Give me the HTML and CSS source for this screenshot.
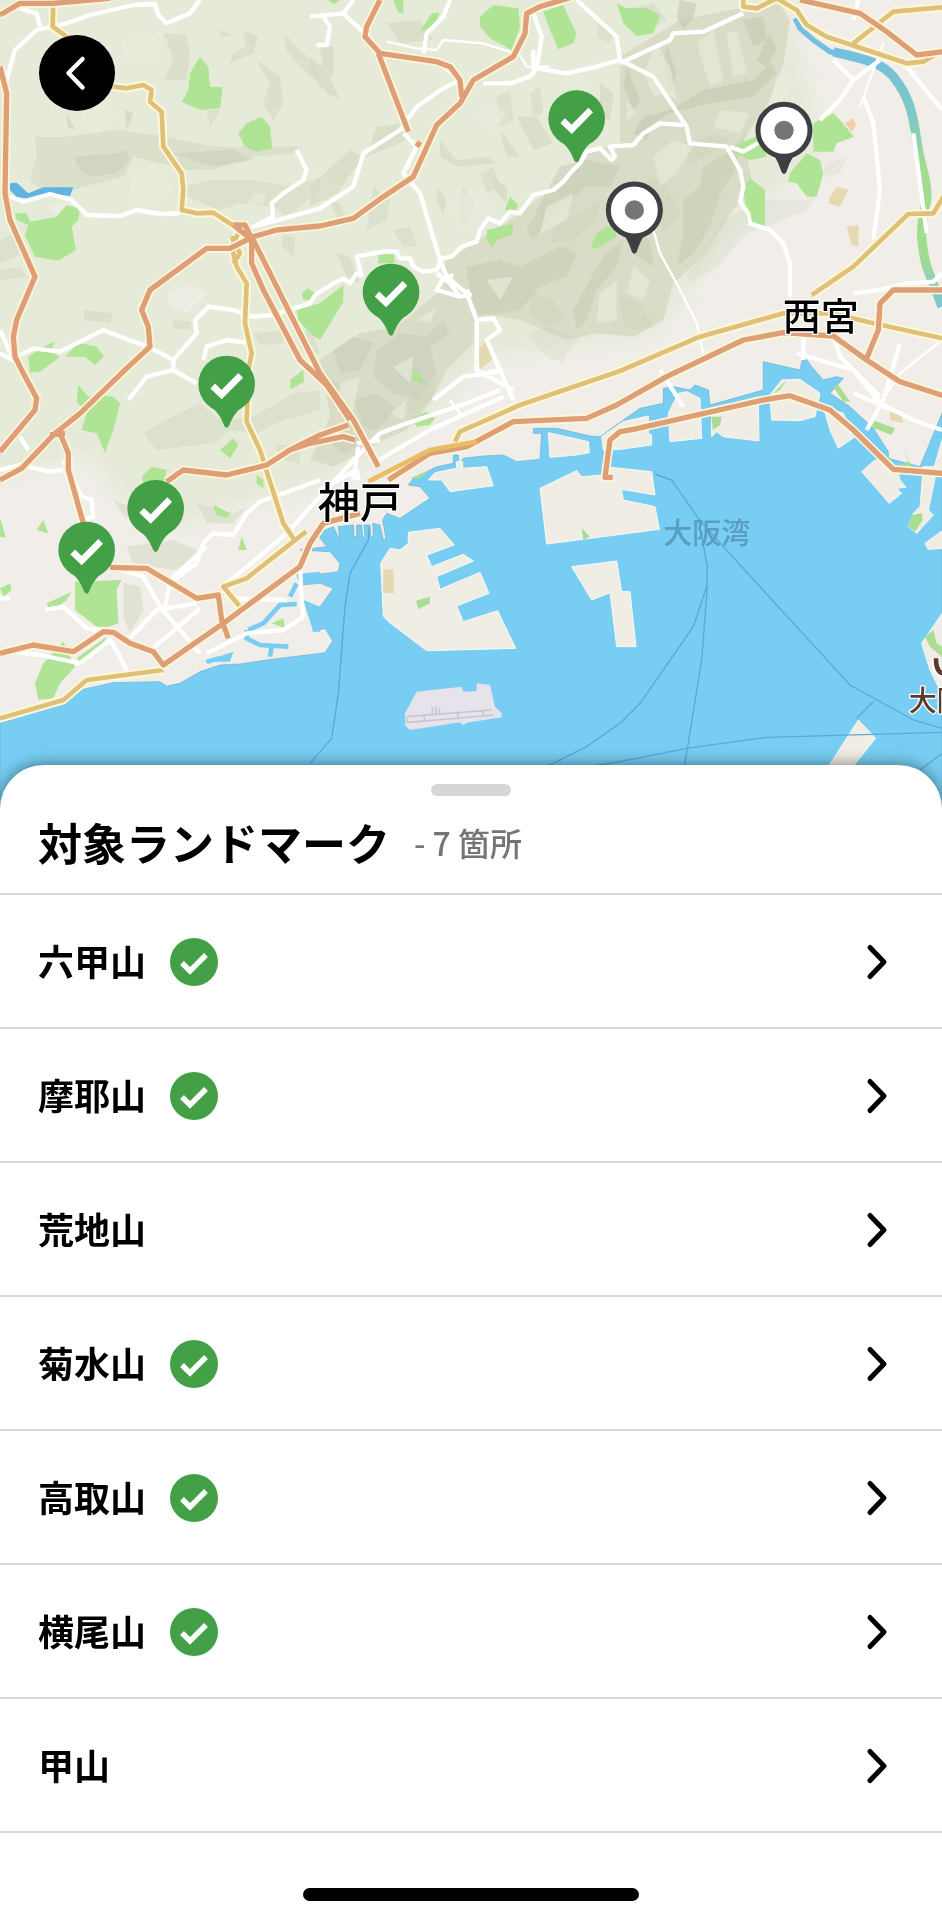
FILE: index.html
```html
<!DOCTYPE html>
<html lang="ja">

<head>
  <meta charset="UTF-8" />
  <meta name="viewport" content="width=device-width, initial-scale=1.0" />
  <title>対象ランドマーク</title>
  <link rel="stylesheet" href="styles.css">
</head>

<body>
  <!-- Shared icons -->
  <svg class="symbols" aria-hidden="true">
    <symbol id="check" viewBox="0 0 48 48">
      <circle cx="24" cy="24" r="24" fill="#43a047" />
      <path d="M12 25 20 33 36 17" fill="none" stroke="#fff" stroke-width="5.400" />
    </symbol>
    <symbol id="chevron" viewBox="0 0 24 40">
      <path d="M4 5.500 18 20 4 34.500" fill="none" stroke="#000" stroke-width="5" stroke-linecap="round" stroke-linejoin="round" />
    </symbol>
  </svg>

  <main class="app">
    <section class="map">
      <svg class="map-canvas" viewBox="0 0 2826 2460" role="img" aria-label="神戸周辺の地図">
        <defs>
          <filter id="soft" x="-10%" y="-10%" width="120%" height="120%">
            <feGaussianBlur stdDeviation="28" />
          </filter>
          <linearGradient id="river" x1="0" y1="0" x2="0" y2="1">
            <stop offset="0" stop-color="#74bfe0" />
            <stop offset="0.250" stop-color="#7dc9c4" />
            <stop offset="0.450" stop-color="#a2dc90" />
            <stop offset="0.800" stop-color="#a2dc90" />
            <stop offset="1" stop-color="#78c8d8" />
          </linearGradient>
          <path id="national-roads" d="M160 0 158 80 200 110M340 260 380 265 430 255 455 270 450 305 485 335 490 440 545 520 550 570 545 630 590 640 640 638 720 690 695 740 710 800 740 850 735 970 755 1060 745 1110 740 1265 780 1350 805 1430 850 1570 880 1615M918 1595 740 1735 670 1760 720 1820M695 710 720 760 700 790M0 2155 190 2100 260 2040 490 2010M1365 1325 1380 1295 1560 1215 1860 1113 2100 1010 2350 940 2500 940 2600 965 2826 1015M2435 885 2560 800 2725 642 2800 640 2830 590M2230-10 2230 20 2270 25 2330-5 2390 30 2420 75 2480 110 2720 190 2770 185 2830 150M2560 130 2630 75 2680 35 2830 22" />
          <path id="expressways" d="M0 200 20 280 15 580 30 660 105 830 50 960 40 1010 45 1070 70 1120 110 1195 105 1230 0 1355M0 45 60 10 160 10 330-5M0 1440 65 1405 165 1300 240 1240 380 1105 450 1040 445 980 425 930 450 870 620 745 690 745 760 710 830 690 960 678 1060 655 1150 590 1240 530 1290 420 1310 375 1380 310 1420 240 1540 170 1575 100 1580 40 1620 20 1720-10M1140 0 1100 80 1095 110 1140 160 1310 185 1350 200 1380 240 1385 290M1135 160 1225 395M1250 440 1260 425M700 675 735 675 755 715M700 675 750 715 690 745M755 720 755 790 790 870 900 1080 980 1155 1050 1260M755 710 960 1120 1060 1260 1135 1400M180 1300 205 1360 205 1410 250 1570M150 1305 195 1300M330 1702 440 1705 590 1795 655 1785 665 1860 685 1915M500 1445 550 1410 680 1425 800 1395 870 1350 930 1330 1030 1310 1065 1320M860 1355 960 1305 1045 1275M0 1960 100 1935 220 1955 310 1895 340 1897 390 1930 460 1955 490 1995 670 1870 900 1700 930 1630 970 1570 1080 1540M1165 1440 1290 1360 1400 1340 1540 1265 1760 1255 1850 1215 2000 1130 2230 1020 2350 998 2500 1008 2600 1080 2700 1145 2830 1187M2600 1075 2635 990 2640 910 2680 870 2830 870M1838 1432 1815 1432 1830 1320 1860 1295 1900 1288 2290 1200 2370 1187 2490 1230 2560 1290 2680 1408 2830 1420M2400 0 2580 40 2660 95 2750 165 2830 155" />
          <g id="pin-done">
            <path d="M-46 70C-24 86-14 108-7 126Q0 136 7 126C14 108 24 86 46 70Z" fill="#43a047" />
            <circle r="85" fill="#43a047" />
            <path d="M-42 6-15 32 42-26" fill="none" stroke="#fff" stroke-width="20" />
          </g>
          <g id="pin-todo">
            <path d="M-38 66C-22 84-14 106-7 126Q0 136 7 126C14 106 22 84 38 66Z" fill="#3f3e42" />
            <circle r="78" fill="#fff" stroke="#3f3e42" stroke-width="15" />
            <circle r="29" fill="#757575" />
          </g>
        </defs>

        <rect width="2826" height="2460" fill="#e6ead9" />

        <!-- Town areas -->
        <g fill="#f1eee9">
          <path filter="url(#soft)" d="M2360-60 2390 120 2440 300 2480 480 2290 600 2180 700 2080 860 1960 1010 1600 1050 1450 1080 1330 1220 1160 1370 930 1470 700 1520 520 1590 360 1490 260 1360 130 1400-60 1440-60 2500 2900 2500 2900-60Z" />
          <path d="M500 880 560 850 625 880 560 940 510 920ZM900 560 960 520 1020 560 960 610ZM140 620 220 600 240 640 190 660Z" opacity="0.600" />
        </g>

        <!-- Hill shading -->
        <g fill="#d6dbc4">
          <path d="M1860 170 2040 60 2240 20 2330 0 2370 60 2350 190 2310 300 2230 420 2260 560 2190 640 2120 760 2020 850 1990 960 1900 1010 1790 1000 1700 1020 1560 960 1440 940 1420 1030 1340 1110 1290 1210 1220 1290 1130 1330 1000 1400 930 1380 990 1250 960 1080 1080 1000 1190 980 1310 880 1340 780 1470 700 1560 640 1700 530 1760 460 1860 430Z" opacity="0.850" />
          <path d="M490 100 560 105 570 160 560 240 490 240 520 180ZM105 410 190 410 280 400 350 390 500 410 640 440 900 440 880 460 760 470 640 510 560 510 400 470 370 530 250 560 150 590 90 540 110 470Z" opacity="0.700" />
          <path d="M540 560 640 540 760 540 880 560 960 530 960 570 860 650 820 620 720 610 660 630 560 590ZM0 720 50 700 70 760 0 790ZM0 810 60 800 80 830 0 840Z" opacity="0.600" />
          <path d="M730 90 775 110 760 160 690 190 700 160 740 140ZM655 90 700 105 665 110ZM770 180 840 230 850 310 820 360 790 310 810 250ZM850 100 900 150 950 200 960 250 900 200 860 150ZM620 330 660 330 630 380ZM250 930 340 940 330 970 255 960ZM850 700 885 715 880 770 845 740Z" opacity="0.700" />
          <path d="M930 170 980 210 1020 300 980 280 930 220ZM960 140 1000 140 1000 230 970 210ZM1050 450 1090 470 1010 580 930 620 930 560ZM1160 70 1260 60 1300 120 1200 130ZM1130 380 1210 370 1220 420 1100 470ZM1320 420 1370 480 1460 470 1490 490 1370 500 1320 470ZM1500 390 1560 470 1520 470ZM1550 350 1610 350 1660 430 1600 450ZM1800 250 1840 280 1830 360 1800 350ZM1310 560 1340 600 1330 640 1310 610ZM1480 530 1520 560 1520 610 1490 580ZM990 600 1020 610 1040 670 1010 650ZM1010 760 1050 770 1080 850 1040 830Z" opacity="0.750" />
          <path d="M760 1250 880 1180 960 1170 960 1230 850 1260 770 1300 690 1290 640 1330 470 1350 430 1300 480 1270 600 1210 660 1260ZM590 1510 700 1540 740 1520 700 1570 620 1570ZM380 1640 520 1620 590 1650 570 1690 520 1710 400 1690ZM820 1330 900 1340 900 1390 850 1380ZM340 1500 390 1520 380 1560ZM370 1750 420 1760 430 1830 390 1900 370 1850Z" opacity="0.600" />
          <path d="M1490 290 1530 270 1540 360 1500 380ZM1590 280 1620 260 1630 340 1600 350ZM1650 330 1700 320 1690 380ZM1390 560 1420 610 1400 690 1370 640ZM1120 560 1170 600 1160 660 1100 690ZM1180 690 1230 680 1250 740 1210 740ZM1440 520 1480 500 1500 560 1460 580ZM900 1010 930 980 960 1060 930 1060ZM760 1000 860 990 850 1030 780 1035ZM520 960 575 965 570 990 520 985ZM1900 20 1960 10 2000 60 1950 90ZM1800 60 1840 90 1830 130 1790 110Z" opacity="0.600" />
        </g>
        <g fill="#c5cbb2" opacity="0.650">
          <path d="M1900 400 1930 350 2010 330 2110 270 2260 240 2310 190 2330 220 2260 290 2130 310 2010 340 1960 370 1940 420ZM2040 0 2090 10 2080 50 2050 90 2030 50ZM2230 60 2290 50 2300 120 2260 140ZM2310 100 2330 150 2300 200 2270 180ZM2000 130 2030 220 2010 280 1990 200ZM1880 200 1920 300 1900 330 1870 260Z" />
          <path d="M2050 600 2100 560 2110 500 2180 460 2240 400 2200 520 2160 580 2130 680 2080 760 2030 800 2050 700ZM1680 500 1760 480 1860 500 1830 560 1760 560 1660 640 1600 720 1580 690ZM1400 800 1500 780 1560 800 1680 740 1730 760 1700 830 1620 860 1560 930 1440 950 1410 890ZM1780 820 1820 760 1870 720 1850 800 1790 870 1760 960 1730 990 1720 930ZM1880 680 1950 720 1960 800 1900 760Z" opacity="0.850" />
          <path d="M1130 1050 1200 1000 1280 1010 1330 960 1350 1000 1290 1040 1310 1120 1250 1200 1180 1180 1120 1130ZM1000 1050 1060 1010 1120 1030 1080 1110 1020 1120ZM1060 1200 1130 1180 1190 1230 1130 1290 1090 1280ZM990 1330 1050 1300 1110 1320 1030 1360ZM220 470 350 460 380 450 390 480 350 520 270 530 240 510ZM510 460 700 450 760 480 640 500ZM200 340 225 390 200 380ZM375 330 400 340 380 390Z" opacity="0.700" />
          <path d="M2170 660 2290 600 2420 600 2450 580 2420 630 2300 680 2240 700 2150 800 2070 850 2060 820 2120 760ZM2480 490 2540 470 2520 520 2470 530ZM1580 1010 1630 980 1740 1010 1700 1060 1690 1090 1640 1070Z" opacity="0.350" />
          <path d="M1660 680 1740 640 1800 600 1790 660 1720 720 1650 730ZM1940 520 2000 560 2040 640 1990 700 1950 620ZM2060 440 2140 400 2190 420 2120 470 2060 500ZM1590 880 1660 900 1700 960 1640 980 1590 940ZM1850 880 1920 910 1960 980 1880 990ZM1220 1210 1270 1160 1310 1140 1290 1200 1230 1260ZM970 1130 1020 1150 1040 1200 1000 1220Z" opacity="0.450" />
        </g>
        <g fill="#e8ecdc" opacity="0.650">
          <path d="M1930 220 1970 130 2010 200 2030 300 1990 280 1960 290ZM2090 130 2140 90 2170 240 2130 260ZM2180 100 2210 90 2240 220 2200 230ZM1880 300 1910 340 1880 360ZM1960 470 2020 420 2080 440 2030 520 1980 560ZM1900 800 1950 840 1930 900 1880 880ZM1800 880 1850 840 1850 960 1790 970ZM1640 620 1720 580 1700 660 1620 700ZM1460 840 1540 830 1500 900ZM1250 960 1310 920 1290 970ZM1020 1150 1080 1130 1060 1230 1010 1240ZM1180 1100 1240 1070 1230 1150ZM1170 1240 1220 1200 1210 1260ZM2330 230 2390 240 2360 300 2310 300ZM2160 330 2250 340 2220 400 2140 380Z" />
          <path d="M360 120 440 90 490 130 470 180 380 190ZM270 250 330 330 360 340 290 400 240 360ZM400 520 460 490 520 560 460 620 380 610ZM760 580 800 580 790 610 740 620ZM1400 340 1460 300 1520 340 1480 400ZM1350 600 1450 560 1500 640 1380 700ZM1700 230 1780 220 1760 260 1690 260Z" />
        </g>

        <!-- Parks -->
        <g fill="#aee494">
          <path d="M600 170 625 200 630 260 668 262 660 325 600 330 545 305 565 270 570 220ZM740 370 785 350 810 380 817 445 770 455 735 440 715 400ZM45 640 80 640 90 665 170 650 200 615 240 625 235 660 215 680 228 750 175 782 105 770 75 705 85 675 50 660ZM85 1070 130 1040 165 1025 150 1055 180 1070 120 1115 90 1118ZM195 1070 235 1028 290 1040 312 1070 285 1095 255 1070ZM905 880 925 865 945 880 940 900 910 900ZM890 930 960 910 1030 855 1030 905 960 1020 930 1000 895 960ZM870 1140 910 1110 912 1145 872 1168Z" />
          <path d="M235 1155 265 1190 290 1185 340 1190 360 1210 340 1290 315 1358 290 1300 245 1290 260 1240 230 1205ZM425 1430 455 1400 500 1410 490 1450 430 1450ZM660 1350 700 1315 715 1335 690 1375ZM770 1425 790 1440 790 1465 770 1450ZM640 1515 690 1540 680 1555 650 1545ZM715 1650 725 1610 740 1650ZM0 1555 18 1612 0 1612ZM110 1590 130 1560 145 1600ZM0 1765 30 1750 35 1770 10 1790ZM140 1810 215 1775 200 1800 150 1835ZM225 1745 365 1740 350 1770 355 1870 325 1880 290 1880 225 1830ZM130 1990 190 1925 225 2000 180 2050 160 2095 115 2100 105 2050ZM230 1975 320 1910 300 1950 240 1985ZM815 1870 850 1855 855 1885Z" />
          <path d="M1440 50 1480 15 1555 25 1560 80 1535 150 1470 115 1440 80ZM1630 35 1690 15 1710 60 1730 100 1720 130 1675 148 1650 90ZM1850 10 1880 25 1940 25 1980 45 1960 100 1910 108 1870 70ZM1180 0 1210 0 1210 40 1195 38ZM985 0 1020 0 1000 12ZM1260 95 1295 40 1318 38 1305 80ZM1515 630 1530 590 1555 615 1545 635ZM1460 690 1540 670 1535 705 1490 720 1475 745 1460 720ZM1135 765 1180 760 1185 790 1135 790ZM1770 750 1790 700 1840 670 1850 710 1800 740ZM1235 1140 1245 1105 1275 1150Z" />
          <path d="M2440 370 2500 340 2520 360 2562 410 2510 430 2500 455 2440 455ZM2220 430 2290 400 2300 470 2250 480 2205 460ZM2370 520 2420 460 2460 480 2470 520 2450 590 2420 590 2390 550 2365 545ZM2230 560 2250 535 2295 570 2295 680 2240 670ZM1235 1255 1280 1235 1305 1255 1290 1275 1250 1280Z" />
        </g>

        <!-- Sea -->
        <path fill="#77cef2" stroke="#69aecd" stroke-width="2" d="M0 2170 60 2148 190 2112 250 2068 340 2048 480 2045 500 2058 540 2050 600 2015 660 1995 720 1992 800 1980 880 1970 975 1958 998 1922 975 1885 940 1895 932 1830 960 1820 1000 1765 960 1750 900 1755 890 1720 940 1725 1015 1715 1020 1690 990 1655 900 1650 980 1640 950 1600 1000 1580 1020 1620 1015 1580 1060 1575 1062 1610 1070 1610 1070 1575 1085 1575 1088 1612 1095 1612 1092 1575 1110 1575 1112 1610 1120 1610 1118 1570 1140 1575 1150 1620 1158 1618 1148 1560 1160 1540 1200 1555 1290 1495 1260 1460 1225 1455 1240 1435 1310 1400 1360 1390 1360 1365 1375 1365 1375 1395 1390 1375 1450 1368 1510 1365 1550 1385 1620 1378 1625 1300 1600 1300 1600 1285 1670 1285 1770 1308 1800 1310 1870 1260 1920 1225 1990 1210 1990 1165 2020 1160 2070 1170 2085 1155 2125 1170 2130 1215 2290 1170 2290 1085 2400 1110 2410 1065 2435 1100 2470 1140 2510 1130 2530 1135 2490 1180 2550 1220 2620 1285 2665 1355 2665 1375 2760 1400 2826 1240 2826 2460 0 2460Z" />
        <path d="M745 1890 790 1870 840 1815 890 1812M870 1790 890 1750M740 1915 780 1935 865 1940M740 1920 740 1890M815 1940 810 1970M620 1985 660 1975M905 1735 950 1735" fill="none" stroke="#77cef2" stroke-width="14" />
        <path d="M915 1720 960 1715 960 1750 915 1750ZM910 1800 960 1820 960 1895 940 1895ZM610 1985 700 1955 690 1985Z" fill="#77cef2" />

        <!-- Islands and piers -->
        <g fill="#f0ede5" stroke="#fbf8f4" stroke-width="3">
          <path d="M1225 1597 1320 1585 1363 1635 1280 1665 1295 1700 1390 1663 1420 1683 1310 1730 1320 1768 1440 1717 1467 1780 1370 1818 1390 1865 1493 1832 1547 1945 1280 1952 1165 1865 1150 1848 1142 1690 1170 1645 1200 1650 1225 1630Z" />
          <path d="M1620 1465 1730 1412 1745 1430 1805 1425 1820 1400 1860 1405 1955 1415 1965 1485 1865 1468 1870 1500 1965 1520 1978 1588 1640 1632Z" />
          <path d="M1285 1440 1305 1418 1370 1405 1370 1385 1388 1385 1388 1405 1460 1400 1480 1457 1350 1475 1325 1440Z" />
          <path d="M1645 1298 1765 1325 1768 1358 1730 1365 1650 1372ZM1715 1700 1850 1683 1865 1775 1890 1775 1908 1940 1850 1940 1830 1778 1775 1800Z" />
          <path d="M1805 1310 1870 1265 1945 1248 1945 1300 1955 1305 1955 1335 1860 1348 1810 1350ZM2005 1240 2035 1180 2060 1175 2100 1195 2105 1315 2010 1325ZM2135 1230 2275 1190 2277 1323 2170 1310 2150 1295 2135 1310Z" />
          <path d="M2310 1185 2345 1140 2400 1138 2460 1180 2445 1250 2400 1262 2315 1260ZM2470 1220 2530 1240 2565 1310 2515 1345 2490 1290ZM2585 1415 2625 1380 2690 1400 2700 1440 2718 1462 2690 1465 2705 1480 2668 1510Z" />
          <path d="M2770 1400 2812 1400 2785 1530 2800 1545 2750 1600 2725 1580 2740 1540 2760 1520ZM2832 1300 2832 1410 2800 1410ZM2775 1630 2830 1590 2830 1645 2785 1648ZM2765 1930 2830 1835 2830 2090 2790 2010ZM2575 2160 2627 2215 2550 2310 2485 2300Z" />
        </g>
        <path d="M1250 2075 1385 2060 1390 2075 1430 2073 1430 2050 1470 2055 1485 2120 1505 2140 1505 2152 1400 2168 1390 2175 1380 2167 1230 2190 1215 2175 1215 2140Z" fill="#e6e3eb" />
        <path d="M1220 2150 1475 2130M1220 2168 1480 2145M1220 2168 1220 2150M1275 2163 1272 2148M1375 2155 1372 2140M1450 2150 1448 2133M1297 2143V2120M1308 2142V2118M1318 2142V2125" fill="none" stroke="#c9c6d3" stroke-width="5" />
        <path d="M1150 1710 1180 1708 1182 1780 1150 1778ZM1435 1050 1460 1020 1485 1070 1440 1110ZM2490 590 2510 560 2545 570 2520 620 2485 610ZM2540 680 2575 675 2575 740 2555 735ZM2670 1235 2705 1245 2710 1270 2670 1260Z" fill="#e4d9b0" />
        <path d="M2535 370 2560 355 2568 375 2555 395Z" fill="#f3cda8" />
        <path d="M1248 1802 1290 1790 1290 1810 1255 1828ZM1745 1585 1770 1610 1750 1620ZM2135 1250 2165 1250 2160 1275 2138 1290ZM2500 1160 2515 1155 2550 1205 2530 1205ZM2610 1258 2685 1285 2675 1305 2620 1285ZM2735 1545 2765 1540 2768 1560 2745 1595 2725 1580ZM2775 1910 2800 1890 2810 1930 2826 1940 2826 1970 2790 1940ZM2320 1180 2360 1140 2340 1170ZM1230 1435 1290 1410 1260 1435ZM2710 1350 2735 1400 2700 1395 2725 1385Z" fill="#a8dd93" />

        <!-- Lake and river -->
        <path d="M30 550 50 548 85 580 130 562 220 562 210 588 160 582 90 598 50 590 30 570Z" fill="#62b4e0" />
        <path d="M2385 55 2400 85 2440 120 2490 155 2590 180" fill="none" stroke="#74bfe0" stroke-width="16" />
        <path d="M2500 155C2600 180 2640 185 2680 230 2730 290 2740 350 2750 420 2760 500 2785 540 2780 600 2760 680 2760 720 2780 800L2826 920" fill="none" stroke="url(#river)" stroke-width="28" />

        <!-- Ferry routes -->
        <path class="ferry" d="M1108 1580 1105 1620 1050 1720 1035 1820 1015 2080 995 2215 930 2290M1965 1422 2015 1440 2095 1555 2170 1640 2550 2055 2740 2160 2826 2185M2095 1555 2122 1700 2120 1760 2080 1880 1920 2110 1860 2170 1760 2240 1640 2300M2122 1760 2105 1980 2050 2320M1700 2310 1860 2285 2060 2245 2300 2212 2826 2197M2760 2310 2826 2260M2570 2155 2620 2105" />

        <!-- Local roads -->
        <g class="road-local">
          <path d="M20 240 45 150 110 90 200 70 270 45 400 15 465 12 475 45 500 70 570 40 600 0M60 25 110 40 120 80M0 990 40 1080 0 1060M30 590 70 605 150 582 215 600 260 645 360 648 410 630 480 642 540 640M60 1065 100 1045 180 1055 310 990 400 1025 445 1040 520 1080 590 1000 585 960 625 920 700 930 760 950 820 945 930 910 945 885 985 860 1000 850 1030 835 1050 850 1070 820 1085 825 1070 770 1110 762 1150 755 1190 755 1200 775 1230 775 1240 800 1270 815 1310 810 1325 775 1355 770 1385 740 1430 725 1440 690 1465 655 1500 670 1530 635 1560 640 1600 585 1660 570 1690 545 1710 520 1740 490 1760 455 1800 445 1835 480 1845 470 1830 440 1900 435 1930 400 1980 370 2050 375" />
          <path d="M385 1200 440 1130 520 1110 590 1150M520 1080 520 1110M610 1080 620 1040 680 1020 750 1030M890 450 920 510 910 540 850 580 815 610 820 650 760 680 960 625 1060 560 1090 460 1200 390 1250 320 1330 265 1380 240 1310 185M1270 160 1280 100 1330 50 1350 0M1210 400 1250 440 1210 520 1260 580 1320 780 1340 830 1400 880 1430 960 1430 1110 1540 1170M930 50 1030 40 1060 0M970 50 990 80 980 135 950 135M1030 40 1110 115M1310 820 1350 850 1380 890 1310 870 1330 835 1360 825M1380 890 1410 885 1400 870M1430 960 1480 955 1500 990 1460 1020 1540 1200M1430 1125 1510 1110M1300 1200 1390 1130 1500 1115M1450 250 1530 250 1590 230 1610 205 1700 220 1790 200 1860 180M1610 205 1625 110 1600 40M1600 150 1600 210M1730 0 1850 110 1860 180 1960 230 2060 380 2070 430 2180 440 2220 510 2230 560 2220 605 2245 640 2250 670 2310 690 2350 730 2370 790 2370 890M1860 190 2010 120 2020 100 2110 95 2230 40" />
          <path d="M2190 440 2230 455 2290 420M2460 360 2520 300 2560 240 2640 180M2560 240 2500 180M2720 200 2826 330M2575 0 2560 60M2590 290 2620 370 2640 570 2620 720M2410 1010V1080M2500 1010 2520 1070 2640 1190M2560 880 2640 870 2720 850 2800 845 2826 820M2700 1030 2650 1200 2600 1290M2740 400 2760 550 2780 700M2390 1060 2560 1110 2640 1210 2740 1260 2826 1290M1980 1110 2050 1220M2560 1180 2700 1240" />
          <path d="M60 1310 85 1350M0 1410 60 1395 150 1415 190 1410M190 1380 210 1420 245 1490 275 1500 280 1550 250 1560M0 1795 30 1795M135 1830 190 1820 260 1885 300 1890M0 1950 120 1965 240 1990 330 1920 360 1970 380 2010M330 1700 430 1730 480 1820 600 1960M390 1915 470 1830 590 1810M440 1960 600 1825M490 1840 510 1750 590 1690 610 1630 640 1600 700 1605 740 1540 780 1505 960 1440M500 1750 620 1640M670 1760 860 1600 960 1490 1080 1360 1140 1300 1220 1270 1400 1210 1500 1170M960 1470 1070 1410 1075 1440M1075 1340 1060 1440M1120 1390 1290 1290 1400 1240 1510 1190M900 1700 905 1800 910 1850 850 1890 740 1900 620 1960M690 1795 860 1800M1070 1330 1140 1320" />
          <path class="thin" d="M1160 125 1250 145 1310 150 1330 120 1450 130 1560 165 1580 200 1650 200M1960 690 1980 760 2030 850 2090 970 2110 1060M2826 1020 2700 1120 2640 1210M2650 130 2580 320M1350 1200 1380 1240" />
        </g>

        <!-- Main roads: casing first, then the road itself -->
        <use class="road-case" href="#national-roads" />
        <use class="road-yellow" href="#national-roads" />
        <use class="road-case" href="#expressways" />
        <use class="road-orange" href="#expressways" />
        <path d="M1105 1445 1290 1350 1430 1325" fill="none" stroke="#e9bd62" stroke-width="14" />

        <!-- Place names -->
        <text class="place city-kobe" x="953" y="1554">神戸</text>
        <text class="place city-nishinomiya" x="2348" y="990">西宮</text>
        <text class="place bay" x="1990" y="1632">大阪湾</text>
        <text class="place osaka" x="2726" y="2134">大阪</text>
        <path d="M2806 1975Q2806 2022 2832 2022" fill="none" stroke="#fff" stroke-width="24" />
        <path d="M2808 1975Q2808 2020 2832 2020" fill="none" stroke="#5a3b2c" stroke-width="14" />

        <!-- Landmark pins -->
        <use href="#pin-todo" x="2352" y="391" />
        <use href="#pin-todo" x="1903" y="630" />
        <use href="#pin-done" x="1730" y="356" />
        <use href="#pin-done" x="1173" y="876" />
        <use href="#pin-done" x="680" y="1152" />
        <use href="#pin-done" x="467" y="1525" />
        <use href="#pin-done" x="260" y="1650" />
      </svg>

      <button class="back" type="button" aria-label="戻る">
        <svg viewBox="0 0 76 76" aria-hidden="true">
          <path d="M43.500 24 29.500 38 43.500 52.500" fill="none" stroke="#fff" stroke-width="4.500" stroke-linecap="round" stroke-linejoin="round" />
        </svg>
      </button>
    </section>

    <section class="sheet">
      <div class="handle"></div>
      <header class="sheet-header">
        <h1>対象ランドマーク</h1>
        <span class="count">- 7 箇所</span>
      </header>
      <ul class="landmarks">
        <li><a href="#"><span class="name">六甲山</span><svg class="done" role="img" aria-label="達成済み"><use href="#check" /></svg><svg class="arrow" aria-hidden="true"><use href="#chevron" /></svg></a></li>
        <li><a href="#"><span class="name">摩耶山</span><svg class="done" role="img" aria-label="達成済み"><use href="#check" /></svg><svg class="arrow" aria-hidden="true"><use href="#chevron" /></svg></a></li>
        <li><a href="#"><span class="name">荒地山</span><svg class="arrow" aria-hidden="true"><use href="#chevron" /></svg></a></li>
        <li><a href="#"><span class="name">菊水山</span><svg class="done" role="img" aria-label="達成済み"><use href="#check" /></svg><svg class="arrow" aria-hidden="true"><use href="#chevron" /></svg></a></li>
        <li><a href="#"><span class="name">高取山</span><svg class="done" role="img" aria-label="達成済み"><use href="#check" /></svg><svg class="arrow" aria-hidden="true"><use href="#chevron" /></svg></a></li>
        <li><a href="#"><span class="name">横尾山</span><svg class="done" role="img" aria-label="達成済み"><use href="#check" /></svg><svg class="arrow" aria-hidden="true"><use href="#chevron" /></svg></a></li>
        <li><a href="#"><span class="name">甲山</span><svg class="arrow" aria-hidden="true"><use href="#chevron" /></svg></a></li>
      </ul>
      <div class="home-bar"></div>
    </section>
  </main>
</body>

</html>
```

FILE: styles.css
```css
* {
  box-sizing: border-box;
}

body {
  margin: 0;
  font-family: "Noto Sans CJK JP", "Noto Sans", sans-serif;
  color: #000;
  background-color: #fff;
}

.symbols {
  position: absolute;
  width: 0;
  height: 0;
}

.app {
  display: flex;
  flex-direction: column;
}

/* Map */
.map {
  position: relative;
}

.map-canvas {
  display: block;
  width: 100%;
  height: auto;
}

.road-local path {
  fill: none;
  stroke: #fff;
  stroke-width: 13;
  stroke-linejoin: round;
}

.road-local .thin {
  stroke-width: 7;
}

.road-case,
.road-yellow,
.road-orange {
  fill: none;
  stroke-linejoin: round;
}

.road-case {
  stroke: #fff8d6;
  stroke-width: 26;
}

.road-yellow {
  stroke: #dfc07a;
  stroke-width: 14;
}

.road-orange {
  stroke: #dd9e78;
  stroke-width: 16;
}

.ferry {
  fill: none;
  stroke: #5aa9d6;
  stroke-width: 4;
}

.place {
  font-weight: 500;
  paint-order: stroke;
  stroke: #fff;
  stroke-width: 8;
  stroke-linejoin: round;
}

.city-kobe {
  font-size: 126px;
}

.city-nishinomiya {
  font-size: 114px;
}

.bay {
  font-size: 87px;
  fill: #5a9dc0;
  stroke: none;
}

.osaka {
  font-size: 84px;
  fill: #5a3b2c;
}

.back {
  position: absolute;
  top: 35px;
  left: 39px;
  width: 76px;
  height: 76px;
  padding: 0;
  border: none;
  border-radius: 50%;
  background-color: #000;
  cursor: pointer;
}

.back svg {
  display: block;
}

/* Bottom sheet */
.sheet {
  position: relative;
  margin-top: -55px;
  padding-top: 19px;
  padding-bottom: 19px;
  background-color: #fff;
  border-radius: 44px 44px 0 0;
  box-shadow: 0 0 16px rgba(0, 0, 0, 0.5);
}

.handle {
  width: 80px;
  height: 12px;
  margin: 0 auto;
  border-radius: 6px;
  background-color: #d6d6d6;
}

.sheet-header {
  display: flex;
  align-items: center;
  gap: 24px;
  height: 99px;
  padding: 0 38px 6px;
  border-bottom: 2px solid #d8d8d8;
}

.sheet-header h1 {
  margin: 0;
  font-size: 44px;
  line-height: 60px;
  font-weight: 700;
}

.count {
  font-size: 32px;
  line-height: 60px;
  font-weight: 500;
  color: #757575;
}

.landmarks {
  margin: 0;
  padding: 0;
  list-style: none;
}

.landmarks a {
  display: flex;
  align-items: center;
  gap: 24px;
  height: 134px;
  padding: 2px 52px 0 38px;
  border-bottom: 2px solid #d8d8d8;
  color: #000;
  text-decoration: none;
}

.name {
  padding-bottom: 4px;
  font-size: 36px;
  line-height: 48px;
  font-weight: 700;
}

.done {
  width: 48px;
  height: 48px;
}

.arrow {
  width: 24px;
  height: 40px;
  margin-left: auto;
}

.home-bar {
  width: 336px;
  max-width: 80%;
  height: 13px;
  margin: 55px auto 0;
  border-radius: 7px;
  background-color: #000;
}
```
